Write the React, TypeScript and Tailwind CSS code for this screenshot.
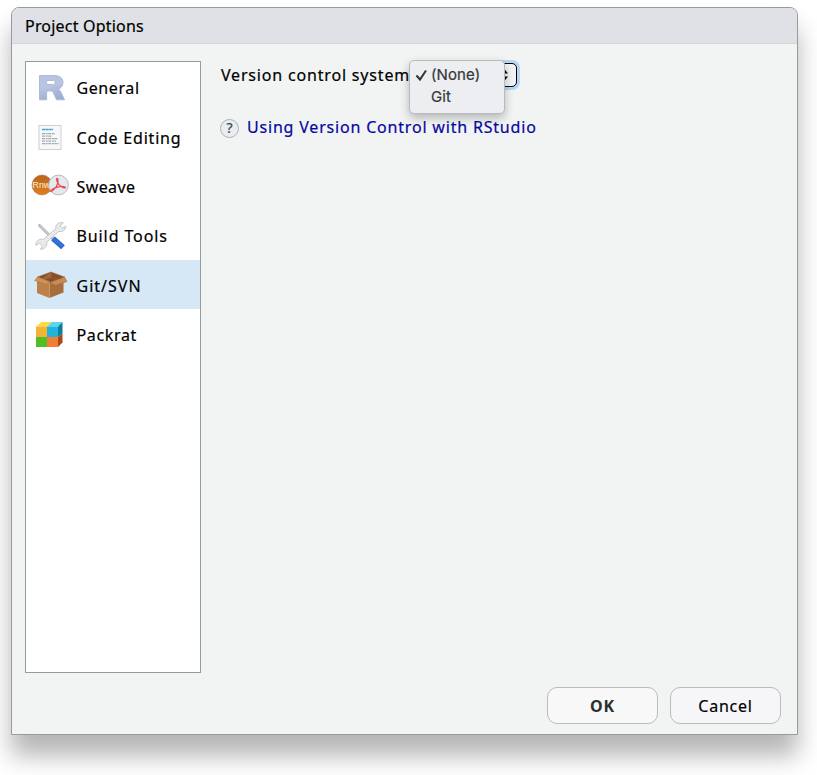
import React from "react";

function RIcon() {
  return (
    <svg width="42" height="40" viewBox="0 0 42 40">
      <defs>
        <linearGradient id="r" x1="0" y1="0" x2="0.3" y2="1">
          <stop offset="0" stopColor="#b8c2dc" />
          <stop offset="0.5" stopColor="#b8c5e2" />
          <stop offset="1" stopColor="#9fb0d5" />
        </linearGradient>
      </defs>
      <path fillRule="evenodd" d="M9.500 7.500h14.500c6 0 9 2.400 9 7 0 3.400-1.800 5.600-4.600 6.500 1.200.8 2 2 2.800 3.600l3.400 7.200h-8l-3-6.400c-.8-1.800-1.400-2.400-3-2.400h-3.900v8.800H9.500zM16.700 12.500v4h5.500c2 0 3-.6 3-2s-1-2-3-2z" fill="url(#r)" stroke="#a4b2d0" strokeWidth=".8" />
    </svg>
  );
}

function PageIcon() {
  return (
    <svg width="42" height="40" viewBox="0 0 42 40">
      <rect x="9" y="8.500" width="22" height="24" fill="#f7f8fa" stroke="#cdd0d4" />
      <path d="M12 12.500h11" stroke="#43a5c4" strokeWidth="1.600" strokeDasharray="3 .3" />
      <path d="M12 16.700h13M12 19.200h10M12 21.700h16M12 24.200h14M12 26.700h17" stroke="#a3a7b0" strokeWidth="1.300" strokeDasharray="3 .7 2 .5" />
    </svg>
  );
}

function SweaveIcon() {
  return (
    <svg width="42" height="40" viewBox="0 0 42 40">
      <defs>
        <linearGradient id="orange" x1="0" y1="0" x2="0" y2="1">
          <stop stopColor="#b9651c" />
          <stop offset="1" stopColor="#df7f1d" />
        </linearGradient>
      </defs>
      <circle cx="12" cy="19" r="10" fill="url(#orange)" stroke="#ad764a" strokeWidth=".6" />
      <text x="2.600" y="22" fill="#fff1df" fontSize="8.800" className="font-['Liberation_Sans',sans-serif]">Rnw</text>
      <circle cx="28.500" cy="19" r="9.900" fill="#e5e8ed" stroke="#aeb4bd" strokeWidth=".9" />
      <path d="M26.700 12.500c1.500-1 1.800 2.700.6 6-1.300 3.400-5.300 7.500-6.500 6.900-1.300-.8 4-3.900 7.600-4.600 3.500-.7 7.500-.2 7 .8-.6 1.100-4.500-.6-6.600-3.300-1.700-2.300-2.500-5.200-2.100-5.800z" fill="none" stroke="#e84b4e" strokeWidth="1.200" />
    </svg>
  );
}

function ToolsIcon() {
  return (
    <svg width="42" height="40" viewBox="0 0 42 40">
      <path d="m9.500 9.500 14 14" stroke="#a0a5ad" strokeWidth="2.600" strokeLinecap="round" />
      <path d="m9.500 9.500 13.500 13.500" stroke="#cfd2d6" strokeWidth="1.300" />
      <path d="M33.400 7c-3.500-1.500-8.400 1-7.500 5.500L13.600 23.300c-4.500-.8-8.500 2-7.600 6l3.500-2.100 3 2.700-2.200 3.300c3.600.6 7.200-2.800 6.400-7l11.900-10.800c4 .9 7.300-1.500 7.200-5.200l-3.400 1.900-2.400-2.300z" fill="#e8e9eb" stroke="#b8bbc0" strokeWidth=".8" />
      <path d="m23 22.500 10 8.700" stroke="#2865c9" strokeWidth="5.500" />
      <path d="m23 22.500 9.700 8" stroke="#3272db" strokeWidth="3.500" />
    </svg>
  );
}

function BoxIcon() {
  return (
    <svg width="42" height="40" viewBox="0 0 42 40">
      <path d="M7.500 12 21 7l13.500 5-12.500 6.500z" fill="#84502a" stroke="#a2693b" strokeWidth=".6" />
      <path d="m21 7 .2 5.500L10 15.500M21.200 12.500 33 15" fill="#a0683c" stroke="#9c6339" strokeWidth=".5" />
      <path d="m7 14 12.500 4v15L7 28z" fill="#bd8048" />
      <path d="m19.500 18 14-4v13.500l-14 5.500z" fill="#a66e3b" />
      <path d="M7.500 12 19.500 16.500l-3 3L4.500 15.500z" fill="#cd945a" stroke="#b0733e" strokeWidth=".5" />
      <path d="m19.500 17.500 15-5.500 2.500 4.500-11.500 4z" fill="#c68a52" stroke="#a36231" strokeWidth=".5" />
      <path d="M19.500 18v15" stroke="#d29c62" strokeWidth=".6" />
    </svg>
  );
}

function CubeIcon() {
  return (
    <svg width="42" height="40" viewBox="0 0 42 40">
      <path d="m6 12.500 5.500-4.500H22L17 12.500z" fill="#ffdb38" />
      <path d="m17 12.500 5-4.500h10.500L28 12.500z" fill="#5bd5ef" />
      <path d="m28 12.500 4.500-4.500v11.500L28 23z" fill="#097f9c" />
      <path d="m28 23 4.500-3.500v9L28 33z" fill="#a84a16" />
      <path d="M6 12.500h11V23H6z" fill="#f5b335" />
      <path d="M17 12.500h11V23H17z" fill="#20b3dd" />
      <path d="M6 23h11v10H6z" fill="#52bd27" />
      <path d="M17 23h11v10H17z" fill="#f47c35" />
    </svg>
  );
}

const items = [
  { label: "General", icon: RIcon, spacing: "pt-px tracking-[0.6px]" },
  { label: "Code Editing", icon: PageIcon, spacing: "pt-[2px] tracking-[0.8px]" },
  { label: "Sweave", icon: SweaveIcon, spacing: "pt-px tracking-[0.4px]" },
  { label: "Build Tools", icon: ToolsIcon, spacing: "pt-px tracking-[0.9px]" },
  { label: "Git/SVN", icon: BoxIcon, spacing: "pt-[2px] tracking-[1px]" },
  { label: "Packrat", icon: CubeIcon, spacing: "pt-px tracking-[0.65px]" },
];

export default function App() {
  return (
    <div className="h-[775px] w-[817px] overflow-hidden bg-white pl-[11px] pt-[7px] font-['Noto_Sans',sans-serif] text-[16px] text-black [-webkit-text-stroke:0.2px_currentColor]">
      <main className="flex h-[728px] w-[787px] flex-col rounded-t-[8px] border border-[#989b9c] bg-[#f2f4f4] shadow-[0_21px_24px_rgba(0,0,0,0.29)]">
        <header className="flex h-[36px] shrink-0 items-center rounded-t-[7px] border-b border-[#d3d5d8] bg-[#e0e1e6] pl-[13px] tracking-[0.2px]">
          <span>Project Options</span>
        </header>
        <div className="flex h-[629px] shrink-0 pl-[13px] pt-[17px]">
          <nav className="h-[612px] w-[176px] shrink-0 border border-[#989b9c] bg-white pt-px">
            {items.map(({ label, icon: Icon, spacing }, i) => (
              <div key={label} className={`flex h-[49.3px] items-center gap-[5px] pl-[3.5px] ${i === 4 ? "bg-[#d6e7f6]" : ""}`}>
                <span className="flex w-[42px] shrink-0"><Icon /></span>
                <span className={`whitespace-nowrap ${spacing}`}>{label}</span>
              </div>
            ))}
          </nav>
          <section className="pl-[20px]">
            <div className="relative flex h-[27px] w-[320px] items-center">
              <span className="whitespace-nowrap tracking-[0.82px]">Version control system:</span>
              <div className="absolute left-[200px] top-[2px] flex h-[24px] w-[96px] items-center justify-end rounded-[5px] border border-black bg-[#f3f3f3] pr-[8px] shadow-[0_0_0_3px_#b5d6f7]">
                <svg width="8" height="14" viewBox="0 0 8 14"><path d="m0 5.500 4-5 4 5zM0 8.500l4 5 4-5z" /></svg>
              </div>
              <div className="absolute left-[188px] top-[-1px] h-[54px] w-[96px] rounded-[5px] border border-[#b9babc] bg-[#eceef1] pt-[3px] font-[Inter,sans-serif] text-[15px] leading-[22px] text-[#37383a] shadow-[0_4px_10px_rgba(0,0,0,0.25)]">
                <div className="flex pl-[5px]">
                  <svg width="16" height="22" viewBox="0 0 16 22"><path d="m1.500 11.500 3.500 4 6-9" fill="none" stroke="#333436" strokeWidth="2" /></svg>
                  <span className="tracking-[0.1px]">(None)</span>
                </div>
                <div className="pl-[21px] tracking-[0.1px]">Git</div>
              </div>
            </div>
            <div className="-ml-px mt-[27px] flex h-[24px] items-center gap-[8px] whitespace-nowrap">
              <span className="mt-[2px] flex h-[19px] w-[19px] shrink-0 items-center justify-center rounded-full border border-[#a9b4bb] bg-[#e9edef] text-[14px] leading-none text-[#38434c]">?</span>
              <a className="-mt-px tracking-[0.81px] text-[#0707a0]">Using Version Control with RStudio</a>
            </div>
          </section>
        </div>
        <footer className="flex justify-end gap-[12px] pr-[16px] pt-[14px]">
          <button className="h-[37px] w-[111px] rounded-[10px] border border-[#b9bbbd] bg-[#f8f8f8] font-bold tracking-[0.8px] text-[#2c3030] [-webkit-text-stroke:0px]">OK</button>
          <button className="h-[37px] w-[111px] rounded-[10px] border border-[#b9bbbd] bg-[#f6f6f9] tracking-[0.75px]">Cancel</button>
        </footer>
      </main>
    </div>
  );
}
